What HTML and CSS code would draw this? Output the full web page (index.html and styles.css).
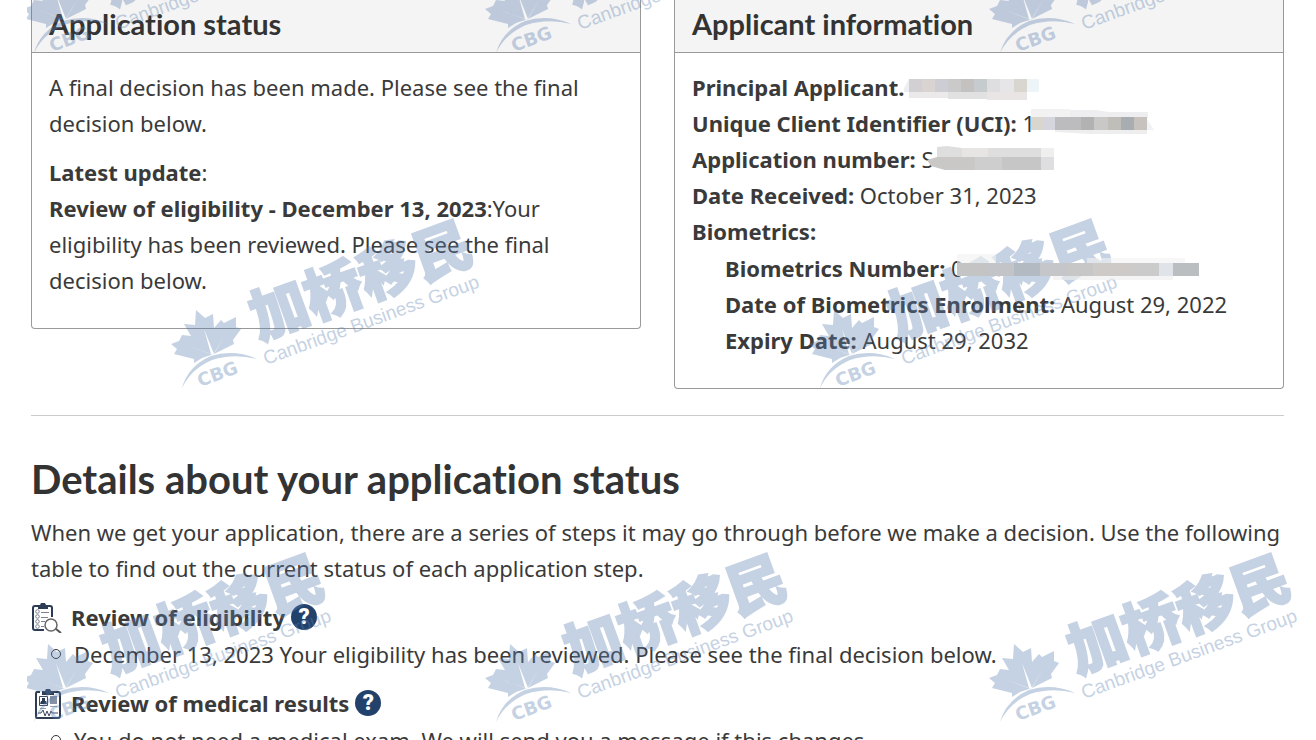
FILE: index.html
```html
<!DOCTYPE html>
<html lang="en">
<head>
    <meta charset="UTF-8">
    <meta name="viewport" content="width=device-width, initial-scale=1.0">
    <title>Application status</title>
    <link rel="stylesheet" href="styles.css">
</head>
<body>
    <svg class="defs" aria-hidden="true">
        <symbol id="mark" viewBox="0 0 336 200">
            <path d="M34 104 L43 112 L51 108 L52 122 L59 114 L62 117 L74 111 L74 121 L79 123 L71 134 L72 138 L60 144 L52 148 L40 152 L32 157 L32 153 L12 148 L15 143 L9 138 L17 135 L20 129 L29 130 L22 118 L33 119 Z"/>
            <path class="vein" d="M49 148 L42 123 L52 148 L64 127 L51 149 L24 139 Z"/>
            <path d="M20 182 Q26 160 49 150 Q72 143 95 153 Q72 147 50 154 Q29 163 20 182 Z"/>
            <text class="cbg" transform="translate(38 181) rotate(-20)">CBG</text>
            <text class="cn" transform="translate(97 134) rotate(-20)">加桥移民</text>
            <text class="en" transform="translate(104 159) rotate(-20)">Canbridge Business Group</text>
        </symbol>
    </svg>

    <main>
        <div class="cards">
            <section class="card">
                <h3>Application status</h3>
                <div class="card-body">
                    <p>A final decision has been made. Please see the final decision below.</p>
                    <p><strong>Latest update</strong>:<br>
                    <strong>Review of eligibility - December 13, 2023</strong>:Your eligibility has been reviewed. Please see the final decision below.</p>
                </div>
            </section>
            <section class="card">
                <h3>Applicant information</h3>
                <div class="card-body">
                    <ul class="info">
                        <li><strong>Principal Applicant.</strong><svg class="redact" width="136" height="22" viewBox="0 0 136 22">
                            <path fill="#eceef1" d="M0 9 L5 0 V13 H0Z"/>
                            <path fill="#d3d0d3" d="M5 0h13v13H5z"/><path fill="#d9d4d1" d="M18 0h13v13H18z"/>
                            <path fill="#cdced3" d="M31 0h13v13H31z"/><path fill="#cacaca" d="M44 0h13v13H44z"/>
                            <path fill="#c3c2c1" d="M57 0h13v13H57z"/><path fill="#c6cbce" d="M70 0h13v13H70z"/>
                            <path fill="#dedee1" d="M83 0h13v13H83z"/><path fill="#e6e6e8" d="M96 0h14v13H96z"/>
                            <path fill="#d9d6d0" d="M110 0h13v13h-13z"/><path fill="#edf5f9" d="M123 0h12v13h-12z"/>
                            <path fill="#ebe9ea" d="M5 13h39v6H5z"/><path fill="#e2e1e1" d="M44 13h39v7H44z"/>
                            <path fill="#e9e5e4" d="M83 13h40v8H83z"/>
                        </svg></li>
                        <li><strong>Unique Client Identifier (UCI):</strong> 1<svg class="redact tight" width="124" height="26" viewBox="0 0 124 26">
                            <path fill="#f3f2f2" d="M0 0h39v8H0z"/><path fill="#eeedef" d="M39 1h26l13 2h39v6H39z"/>
                            <path fill="#d9d6d0" d="M0 8h12v13H0z"/><path fill="#d5d6dd" d="M12 8h12v13H12z"/>
                            <path fill="#bcbcbe" d="M24 8h26v13H24z"/><path fill="#b3b2b3" d="M50 8h13v13H50z"/>
                            <path fill="#c9c8c6" d="M63 8h14v13H63z"/><path fill="#bfbeb9" d="M77 8h13v13H77z"/>
                            <path fill="#a8adb2" d="M90 8h13v13H90z"/><path fill="#c7c2be" d="M103 8h13v13h-13z"/>
                            <path fill="#eff3f7" d="M116 10l7 11h-7z"/><path fill="#eeeeef" d="M24 21h92v4H60l-36-2z"/>
                        </svg></li>
                        <li><strong>Application number:</strong> S<svg class="redact over" width="128" height="25" viewBox="0 0 128 25">
                            <path fill="#dedede" d="M10 1 20 0l15 2v9H10z"/><path fill="#e6e5e4" d="M35 2h39v9H35z"/>
                            <path fill="#dedede" d="M61 2h53v9H61z"/><path fill="#f0eff0" d="M114 2h13v9h-13z"/>
                            <path fill="#c9c8c7" d="M0 14 10 11h38v13H18L4 20z"/><path fill="#cfcecf" d="M48 11h27v13H48z"/>
                            <path fill="#c5c6c5" d="M75 11h39v13H75z"/><path fill="#dedee0" d="M114 11h13v13h-13z"/>
                        </svg></li>
                        <li><strong>Date Received:</strong> October 31, 2023</li>
                        <li><strong>Biometrics:</strong>
                            <ul>
                                <li><strong>Biometrics Number:</strong> 0<svg class="redact over" width="243" height="26" viewBox="0 0 243 26">
                                    <path fill="#f2f2f2" fill-opacity=".6" d="M0 0h39v9H0zM130 4h98v5h-98z"/>
                                    <path fill="#c4c4c4" d="M0 9h31v13H0z"/><path fill="#c2c4c7" d="M31 9h26v13H31z"/>
                                    <path fill="#b4bac2" d="M57 9h26v13H57z"/><path fill="#c5c6c9" d="M83 9h27v13H83z"/>
                                    <path fill="#c8c7c7" d="M110 9h26v13h-26z"/><path fill="#cdcac8" d="M136 9h40v13h-40z"/>
                                    <path fill="#cbcbcb" d="M176 9h26v13h-26z"/><path fill="#e0e3ea" d="M202 9h14v13h-14z"/>
                                    <path fill="#bbbec0" d="M216 9h26v13h-26z"/><path fill="#eeecec" fill-opacity=".6" d="M96 22h120v4H96z"/>
                                </svg></li>
                                <li><strong>Date of Biometrics Enrolment:</strong> August 29, 2022</li>
                                <li><strong>Expiry Date:</strong> August 29, 2032</li>
                            </ul>
                        </li>
                    </ul>
                </div>
            </section>
        </div>

        <hr>

        <h2>Details about your application status</h2>
        <p class="intro">When we get your application, there are a series of steps it may go through before we make a decision. Use the following table to find out the current status of each application step.</p>

        <section class="step">
            <h4>
                <svg class="step-icon" width="32" height="32" viewBox="0 0 32 32" fill="none">
                    <path stroke="#2d3c55" stroke-width="2" d="M8 5H4Q2 5 2 7V27Q2 29 4 29H13M17 5H19Q21 5 21 7V16"/>
                    <path fill="#2d3c55" d="M7 4h2l1-2h4l1 2h2v4H7z"/>
                    <g stroke="#7c838f"><path d="M10 11.500H18M10 16.500H17M10 20.500H14M10 25.500H13"/>
                    <circle cx="6.500" cy="10.500" r="1.800"/><circle cx="6.500" cy="15.500" r="1.800"/><circle cx="6.500" cy="20.500" r="1.800"/><circle cx="6.500" cy="25.500" r="1.800"/></g>
                    <circle cx="20" cy="24" r="6" fill="#fff" stroke="#666" stroke-width="1.500"/>
                    <path stroke="#555" stroke-width="2" d="M25 28L30 32"/>
                </svg>
                Review of eligibility
                <button type="button" class="help" aria-label="Help with review of eligibility">?</button>
            </h4>
            <ul>
                <li>December 13, 2023 Your eligibility has been reviewed. Please see the final decision below.</li>
            </ul>
        </section>
        <section class="step">
            <h4>
                <svg class="step-icon" width="32" height="32" viewBox="0 0 32 32" fill="none">
                    <path fill="#fff" fill-opacity=".5" stroke="#2d3c55" stroke-width="2" d="M9 5H6Q5 5 5 7V29Q5 31 6 31H27Q29 31 29 29V7Q29 5 27 5H23"/>
                    <path fill="#2d3c55" d="M11 4h3l1-2h4l1 2h3v4H11z"/>
                    <path stroke="#3e4960" d="M8.500 9.500h8v9h-8z"/>
                    <path fill="#2d3c55" d="M11 11h3v3h1l1 3H9l1-3h1z"/>
                    <path fill="#8791a3" d="M19 9h7v8h-7z"/>
                    <path stroke="#9aa1ad" d="M19 19.500H26M9 21.500H15"/>
                    <path stroke="#3e4960" d="M7 26H10L12 23L14 29L16 24L18 29L20 24L21 26H27"/>
                </svg>
                Review of medical results
                <button type="button" class="help" aria-label="Help with review of medical results">?</button>
            </h4>
            <ul>
                <li>You do not need a medical exam. We will send you a message if this changes.</li>
            </ul>
        </section>
    </main>

    <div class="watermarks" aria-hidden="true">
        <svg class="wm top left"><use href="#mark"/></svg>
        <svg class="wm top center"><use href="#mark"/></svg>
        <svg class="wm top right"><use href="#mark"/></svg>
        <svg class="wm middle first"><use href="#mark"/></svg>
        <svg class="wm middle second"><use href="#mark"/></svg>
        <svg class="wm bottom left"><use href="#mark"/></svg>
        <svg class="wm bottom center"><use href="#mark"/></svg>
        <svg class="wm bottom right"><use href="#mark"/></svg>
    </div>
</body>
</html>
```
FILE: styles.css
```css
* {
    box-sizing: border-box;
}

body {
    margin: 0;
    position: relative;
    height: 100vh;
    overflow: hidden;
    background: #fff;
    color: #3a3a3a;
    font-family: "Noto Sans", sans-serif;
    font-size: 22px;
    line-height: 36px;
}

h2, h3, h4, p, ul {
    margin: 0;
    padding: 0;
}

h2, h3 {
    color: #333;
    font-family: Lato, sans-serif;
    font-variant-ligatures: none;
}

ul {
    list-style: none;
}

.defs {
    position: absolute;
    width: 0;
    height: 0;
}

main {
    padding: 0 32px 0 31px;
}

/* summary cards */
.cards {
    display: grid;
    grid-template-columns: 1fr 1fr;
    align-items: start;
    gap: 33px;
}

.card {
    border: 1px solid #999;
    border-top: 0;
    border-radius: 0 0 4px 4px;
}

.card h3 {
    padding: 6px 17px 10px;
    background: #f4f4f4;
    border-bottom: 1px solid #999;
    font-size: 29px;
    line-height: 36px;
}

.card-body {
    padding: 16px 17px 30px;
}

.card-body p + p {
    margin-top: 13px;
}

.info ul {
    margin-top: 1px;
    padding-left: 33px;
}

.redact {
    position: relative;
    z-index: 2;
    vertical-align: middle;
}

.redact.tight,
.redact.over {
    top: -4px;
    margin-left: -4px;
}

.redact.over {
    margin-left: -7px;
}

hr {
    margin: 26px 0 0;
    border: 0;
    border-top: 1px solid #ccc;
}

h2 {
    margin-top: 39px;
    font-size: 40px;
    line-height: 48px;
}

.intro {
    margin-top: 11px;
}

/* application steps */
.step {
    margin-top: 12px;
}

.step h4 {
    display: flex;
    align-items: center;
    height: 38px;
    font-size: 22px;
}

.step-icon {
    flex: none;
    margin-right: 8px;
}

.help {
    width: 26px;
    height: 26px;
    margin-left: 6px;
    padding: 0;
    border: 0;
    border-radius: 50%;
    background: #23426b;
    color: #fff;
    font-family: Roboto, sans-serif;
    font-size: 22px;
    font-weight: 900;
    line-height: 26px;
    cursor: pointer;
}

.step li {
    display: flex;
    align-items: center;
    gap: 13px;
    padding-left: 20px;
}

.step li::before {
    content: "";
    width: 8px;
    height: 8px;
    border: 1px solid #333;
    border-radius: 50%;
}

/* watermarks lie over the whole page */
.watermarks {
    position: absolute;
    top: 0;
    right: 0;
    bottom: 0;
    left: 27px;
    overflow: hidden;
    pointer-events: none;
}

.wm {
    position: absolute;
    width: 336px;
    height: 200px;
    fill: #5b7fb0;
    opacity: .35;
}

.wm.top { top: -129px; }
.wm.middle { top: 206px; }
.wm.bottom { top: 540px; }
.wm.left { left: -13px; }
.wm.center { left: 449px; }
.wm.right { left: 953px; }
.wm.first { left: 135px; }
.wm.second { left: 773px; }

.vein {
    fill: #fff;
}

.cbg {
    font-family: "DejaVu Sans", sans-serif;
    font-size: 18px;
    font-weight: bold;
}

.cn {
    font-family: "Noto Sans CJK SC", sans-serif;
    font-size: 58px;
    font-weight: 900;
    stroke: #5b7fb0;
    stroke-width: 2;
}

.en {
    font-family: "Liberation Sans", sans-serif;
    font-size: 19px;
}
```
